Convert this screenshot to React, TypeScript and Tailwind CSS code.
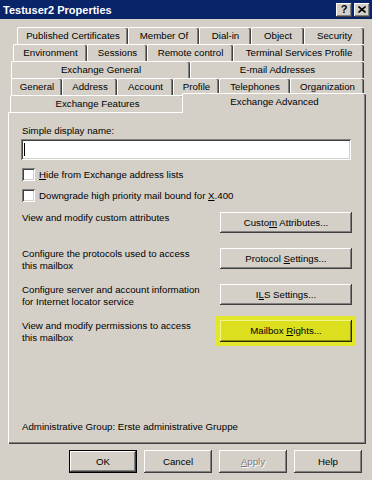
import type { ReactNode } from "react";

const raised =
  "shadow-[inset_-1px_-1px_#404040,inset_1px_1px_#ffffff,inset_-2px_-2px_#808080,inset_2px_2px_#d4d0c8]";
const sunken =
  "shadow-[inset_1px_1px_#808080,inset_-1px_-1px_#ffffff,inset_2px_2px_#404040,inset_-2px_-2px_#d4d0c8]";

type TabRow = { pad: string; tabs: [string, string][] };

const tabRows: TabRow[] = [
  {
    pad: "pl-[17px]",
    tabs: [
      ["Published Certificates", "w-[111px]"],
      ["Member Of", "w-[71px]"],
      ["Dial-in", "w-[52px]"],
      ["Object", "w-[53px]"],
      ["Security", "w-[60px]"],
    ],
  },
  {
    pad: "pl-[13px]",
    tabs: [
      ["Environment", "w-[74px]"],
      ["Sessions", "w-[60px]"],
      ["Remote control", "w-[86px]"],
      ["Terminal Services Profile", "w-[131px]"],
    ],
  },
  {
    pad: "pl-[11px]",
    tabs: [
      ["Exchange General", "w-[179px]"],
      ["E-mail Addresses", "w-[174px]"],
    ],
  },
  {
    pad: "pl-[11px]",
    tabs: [
      ["General", "w-[51px]"],
      ["Address", "w-[55px]"],
      ["Account", "w-[56px]"],
      ["Profile", "w-[46px]"],
      ["Telephones", "w-[71px]"],
      ["Organization", "w-[74px]"],
    ],
  },
];

function Tab({ label, width }: { label: string; width: string }) {
  return (
    <div
      className={`${width} flex h-[17px] shrink-0 items-center justify-center rounded-t-[2px] border-l border-t border-white pb-[1px] shadow-[inset_-1px_0_#404040,inset_-2px_0_#808080]`}
    >
      {label}
    </div>
  );
}

function Key({ children }: { children: ReactNode }) {
  return <span className="underline decoration-1 underline-offset-[1px]">{children}</span>;
}

function Check({ children }: { children: ReactNode }) {
  return (
    <div className="flex h-[13px] items-center gap-[4px] pl-[1px]">
      <div className={`h-[13px] w-[13px] shrink-0 bg-white ${sunken}`} />
      <span>{children}</span>
    </div>
  );
}

function Button({ children, className = "" }: { children: ReactNode; className?: string }) {
  return (
    <div
      className={`flex h-[21px] w-[132px] shrink-0 items-center justify-center bg-[#d4d0c8] ${raised} ${className}`}
    >
      {children}
    </div>
  );
}

function SettingRow({ text, children }: { text: ReactNode; children: ReactNode }) {
  return (
    <div className="flex h-[36px] items-start justify-between">
      <div className="w-[190px] pl-[1px] pt-[1px]">{text}</div>
      <div className="mt-[1px]">{children}</div>
    </div>
  );
}

function DialogButton({ children, className = "" }: { children: ReactNode; className?: string }) {
  return (
    <div className={`flex h-[23px] w-[68px] items-center justify-center bg-[#d4d0c8] ${className}`}>
      {children}
    </div>
  );
}

export default function App() {
  return (
    <div className="h-[480px] w-[372px] overflow-hidden bg-[#d4d0c8] font-['Liberation_Sans',Arial,sans-serif] text-[9.7px] leading-[12px] text-black">
      {/* title bar */}
      <div className="flex h-[19px] items-center justify-between bg-[#0a246a] pl-[3px] pr-[2px]">
        <span className="text-[11px] font-bold text-white">Testuser2 Properties</span>
        <div className="flex items-center gap-[2px]">
          <div
            className={`flex h-[14px] w-[16px] items-center justify-center bg-[#d4d0c8] text-[11px] font-bold leading-none ${raised}`}
          >
            ?
          </div>
          <div className={`flex h-[14px] w-[16px] items-center justify-center bg-[#d4d0c8] ${raised}`}>
            <svg width="8" height="7" viewBox="0 0 8 7">
              <path d="M0.5 0.5 L7.5 6.5 M7.5 0.5 L0.5 6.5" stroke="#000" strokeWidth="1.6" />
            </svg>
          </div>
        </div>
      </div>

      {/* tab rows */}
      <div className="mt-[8px] flex flex-col">
        {tabRows.map((row, i) => (
          <div key={i} className={`flex h-[17px] ${row.pad}`}>
            {row.tabs.map(([label, width]) => (
              <Tab key={label} label={label} width={width} />
            ))}
          </div>
        ))}
        <div className="flex h-[17px] items-end pl-[10px]">
          <Tab label="Exchange Features" width="w-[174px]" />
          <div className="relative z-10 -mb-[1px] -ml-[2px] flex h-[20px] w-[184px] shrink-0 items-start justify-center rounded-t-[2px] border-l border-t border-white bg-[#d4d0c8] pt-[2px] shadow-[inset_-1px_0_#404040,inset_-2px_0_#808080]">
            Exchange Advanced
          </div>
        </div>
      </div>

      {/* tab page */}
      <div className="ml-[8px] flex h-[332px] w-[358px] flex-col pl-[13px] pr-[14px] pt-[13px] shadow-[inset_1px_1px_#ffffff,inset_-1px_-1px_#404040,inset_-2px_-2px_#808080]">
        <div className="pl-[1px]">Simple display name:</div>
        <div className={`mt-[2px] flex h-[21px] w-[330px] items-center bg-white pl-[3px] ${sunken}`}>
          <div className="h-[13px] w-px bg-black" />
        </div>
        <div className="mt-[8px]">
          <Check>
            <Key>H</Key>ide from Exchange address lists
          </Check>
        </div>
        <div className="mt-[8px]">
          <Check>
            Downgrade high priority mail bound for <Key>X</Key>.400
          </Check>
        </div>

        <div className="mt-[9px] flex flex-col">
          <SettingRow text="View and modify custom attributes">
            <Button>
              <span>
                Custo<Key>m</Key> Attributes...
              </span>
            </Button>
          </SettingRow>
          <SettingRow
            text={
              <>
                Configure the protocols used to access
                <br />
                this mailbox
              </>
            }
          >
            <Button>
              <span>
                Protocol <Key>S</Key>ettings...
              </span>
            </Button>
          </SettingRow>
          <SettingRow
            text={
              <>
                Configure server and account information
                <br />
                for Internet locator service
              </>
            }
          >
            <Button>
              <span>
                I<Key>L</Key>S Settings...
              </span>
            </Button>
          </SettingRow>
          <SettingRow
            text={
              <>
                View and modify permissions to access
                <br />
                this mailbox
              </>
            }
          >
            <div className="flex h-[22px] w-[132px] items-center justify-center bg-[#dcdf1e] shadow-[0_0_0_4px_#e3e72c,inset_-1px_-1px_#2a2a00,inset_1px_1px_#f3f58a,inset_-2px_-2px_#8c8d12]">
              <span>
                Mailbox <Key>R</Key>ights...
              </span>
            </div>
          </SettingRow>
        </div>

        <div className="mt-[66px] pl-[1px]">Administrative Group: Erste administrative Gruppe</div>
      </div>

      {/* dialog buttons */}
      <div className="mt-[6px] flex justify-end gap-[7px] pr-[10px]">
        <DialogButton className="border border-black shadow-[inset_-1px_-1px_#404040,inset_1px_1px_#ffffff,inset_-2px_-2px_#808080]">
          OK
        </DialogButton>
        <DialogButton className={raised}>Cancel</DialogButton>
        <DialogButton className={`${raised} text-[#808080] [text-shadow:1px_1px_0_#ffffff]`}>
          <span>
            <Key>A</Key>pply
          </span>
        </DialogButton>
        <DialogButton className={raised}>Help</DialogButton>
      </div>
    </div>
  );
}
